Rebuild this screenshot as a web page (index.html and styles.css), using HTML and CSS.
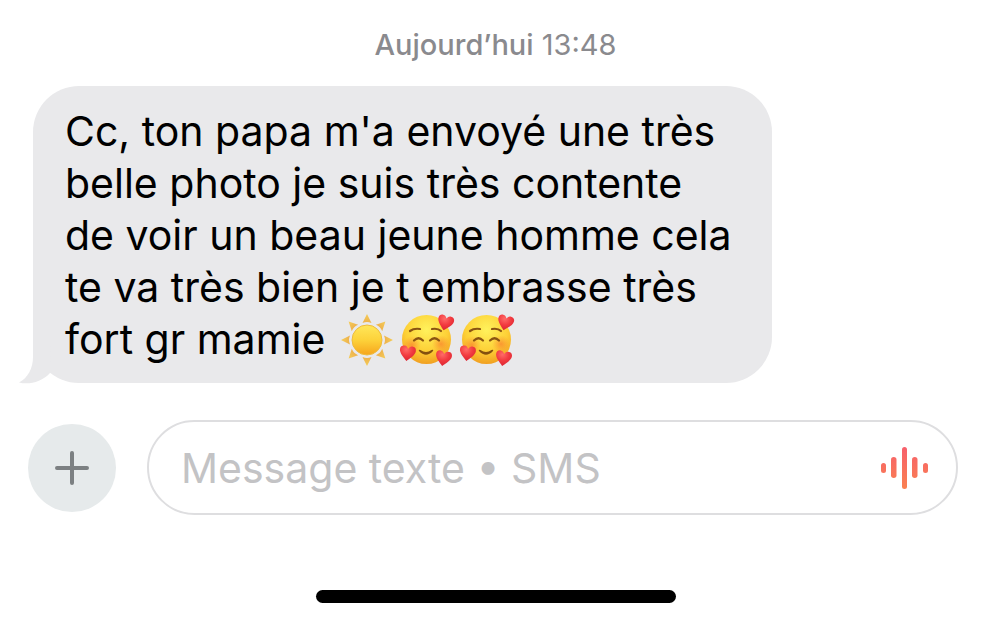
FILE: index.html
```html
<!DOCTYPE html>
<html lang="fr">
<head>
<meta charset="utf-8">
<meta name="viewport" content="width=device-width, initial-scale=1">
<title>Messages</title>
<link rel="stylesheet" href="styles.css">
</head>
<body>
<svg class="defs" aria-hidden="true">
  <defs>
    <linearGradient id="sunFill" x1="0" y1="0" x2="0" y2="1">
      <stop offset="0" stop-color="#ffe75a"/><stop offset=".5" stop-color="#fdd23a"/><stop offset="1" stop-color="#f6a51c"/>
    </linearGradient>
    <linearGradient id="rayFill" x1="0" y1="0" x2="0" y2="1">
      <stop offset="0" stop-color="#f5cd58"/><stop offset="1" stop-color="#edb04c"/>
    </linearGradient>
    <radialGradient id="faceFill" cx=".5" cy=".3" r=".72">
      <stop offset="0" stop-color="#fff25c"/><stop offset=".6" stop-color="#fdd037"/><stop offset="1" stop-color="#f09c1f"/>
    </radialGradient>
    <radialGradient id="blush">
      <stop offset="0" stop-color="#f8672c" stop-opacity=".55"/><stop offset="1" stop-color="#f8782c" stop-opacity="0"/>
    </radialGradient>
    <radialGradient id="heartFill" cx=".4" cy=".25" r=".8">
      <stop offset="0" stop-color="#ff6b68"/><stop offset=".5" stop-color="#f23b40"/><stop offset="1" stop-color="#d92231"/>
    </radialGradient>
    <path id="heart" fill="url(#heartFill)" d="M0 8C-3 5-8 1-8-3C-8-6-6-7-4-7C-2-7-1-6 0-4C1-6 2-7 4-7C6-7 8-6 8-3C8 1 3 5 0 8Z"/>
    <path id="ray" d="M0-26L4.500-17Q0-19-4.500-17Z"/>
    <symbol id="love" viewBox="0 0 60 52" overflow="visible">
      <circle cx="29.500" cy="26.500" r="24.500" fill="url(#faceFill)"/>
      <circle cx="15" cy="32" r="9" fill="url(#blush)"/>
      <circle cx="44" cy="31" r="9" fill="url(#blush)"/>
      <g fill="none" stroke="#8a5312" stroke-width="2.200" stroke-linecap="round">
        <path d="M13 18Q17 15 23 16"/><path d="M35 16Q41 15 44 18"/>
        <path d="M17 27.500Q21.500 23 26 27.500"/><path d="M33 27.500Q37.500 23 42 27.500"/>
      </g>
      <path fill="#83500f" d="M23.500 37Q29 41 34.500 37Q37 36 36 38Q29 45.500 22 38Q21 36 23.500 37Z"/>
      <use href="#heart" transform="translate(48.500 9.500) rotate(14)"/>
      <use href="#heart" transform="translate(10.500 40) rotate(8)"/>
      <use href="#heart" transform="translate(46.500 45) rotate(10)"/>
    </symbol>
  </defs>
</svg>
<main class="screen">
  <p class="stamp"><strong class="stamp-day">Aujourd’hui</strong> <time>13:48</time></p>
  <section class="thread">
    <p class="bubble">Cc, ton papa m'a envoyé une très belle photo je suis très contente de voir un beau jeune homme cela te va très bien je t embrasse très fort gr mamie <span class="emojis"><svg class="emoji" viewBox="0 0 60 52" role="img" aria-label="Soleil"><g transform="translate(30 27)" fill="url(#rayFill)"><use href="#ray"/><use href="#ray" transform="rotate(45)"/><use href="#ray" transform="rotate(90)"/><use href="#ray" transform="rotate(135)"/><use href="#ray" transform="rotate(180)"/><use href="#ray" transform="rotate(225)"/><use href="#ray" transform="rotate(270)"/><use href="#ray" transform="rotate(315)"/></g><circle cx="30" cy="27" r="15" fill="url(#sunFill)" stroke="#eebb3c"/></svg><svg class="emoji" viewBox="0 0 60 52" role="img" aria-label="Visage souriant avec cœurs"><use href="#love"/></svg><svg class="emoji" viewBox="0 0 60 52" role="img" aria-label="Visage souriant avec cœurs"><use href="#love"/></svg></span>
      <svg class="tail" viewBox="0 0 32 50" aria-hidden="true"><path d="M14 0V22C14 33 9 43 0 47.500C10 50 23 47 31 38L32 0Z"/></svg>
    </p>
  </section>
  <form class="composer">
    <button class="add" type="button" aria-label="Ajouter">
      <svg class="add-icon" viewBox="0 0 34 34" aria-hidden="true"><path d="M17 2V32M2 17H32"/></svg>
    </button>
    <div class="field">
      <input class="field-input" type="text" aria-label="Message texte" placeholder="Message texte • SMS">
      <button class="audio" type="button" aria-label="Message audio">
        <svg class="audio-icon" viewBox="0 0 48 42" aria-hidden="true">
          <defs><linearGradient id="wave" gradientUnits="userSpaceOnUse" x1="0" y1="0" x2="0" y2="42"><stop offset="0" stop-color="#f7606c"/><stop offset="1" stop-color="#fa8150"/></linearGradient></defs>
          <g fill="url(#wave)"><rect x="0" y="16" width="5" height="10" rx="2.500"/><rect x="10" y="10" width="5.500" height="21" rx="2.750"/><rect x="21" y="0" width="5" height="42" rx="2.500"/><rect x="31" y="10" width="5.500" height="21" rx="2.750"/><rect x="42" y="16" width="5" height="10" rx="2.500"/></g>
        </svg>
      </button>
    </div>
  </form>
  <div class="home-bar"></div>
</main>
</body>
</html>
```
FILE: styles.css
```css
* {
  box-sizing: border-box;
}

body {
  margin: 0;
  background: #fff;
  color: #000;
  font-family: Inter, "Liberation Sans", sans-serif;
}

.defs {
  position: absolute;
  width: 0;
  height: 0;
}

.screen {
  display: flex;
  flex-direction: column;
  padding-top: 28px;
}

.stamp {
  margin: 0;
  padding-right: 9px;
  color: #8a8a8e;
  font-size: 29px;
  line-height: 34px;
  text-align: center;
}

.stamp-day {
  font-weight: 500;
}

.thread {
  padding: 24px 32px 0 33px;
}

.bubble {
  position: relative;
  width: fit-content;
  max-width: 739px;
  margin: 0;
  padding: 19px 32px 18px;
  border-radius: 46px;
  background: #e9e9eb;
  font-size: 41px;
  line-height: 52px;
}

.emojis {
  white-space: nowrap;
}

.emoji {
  width: 60px;
  height: 52px;
  overflow: visible;
  vertical-align: top;
}

.tail {
  position: absolute;
  bottom: -2px;
  left: -14px;
  width: 32px;
  height: 50px;
  fill: #e9e9eb;
}

.composer {
  display: flex;
  align-items: center;
  gap: 31px;
  margin: 0;
  padding: 37px 42px 0 28px;
}

.add {
  display: grid;
  flex: none;
  place-items: center;
  width: 88px;
  height: 88px;
  padding: 0;
  border: 0;
  border-radius: 50%;
  background: #e6eaeb;
}

.add-icon {
  width: 34px;
  height: 34px;
  fill: none;
  stroke: #7c8082;
  stroke-width: 4;
  stroke-linecap: round;
}

.field {
  display: flex;
  flex: 1;
  align-items: center;
  min-width: 0;
  padding: 20px 27px 19px 32px;
  border: 2px solid #dedee0;
  border-radius: 48px;
}

.field-input {
  flex: 1;
  min-width: 0;
  height: 52px;
  padding: 0;
  border: 0;
  outline: 0;
  background: transparent;
  color: #000;
  font: inherit;
  font-size: 41px;
}

.field-input::placeholder {
  color: #c3c3c5;
  opacity: 1;
}

.audio {
  display: grid;
  flex: none;
  padding: 0;
  border: 0;
  background: transparent;
}

.audio-icon {
  width: 48px;
  height: 42px;
}

.home-bar {
  align-self: center;
  width: 36%;
  height: 13px;
  margin: 75px 8px 0 0;
  border-radius: 7px;
  background: #000;
}
```
